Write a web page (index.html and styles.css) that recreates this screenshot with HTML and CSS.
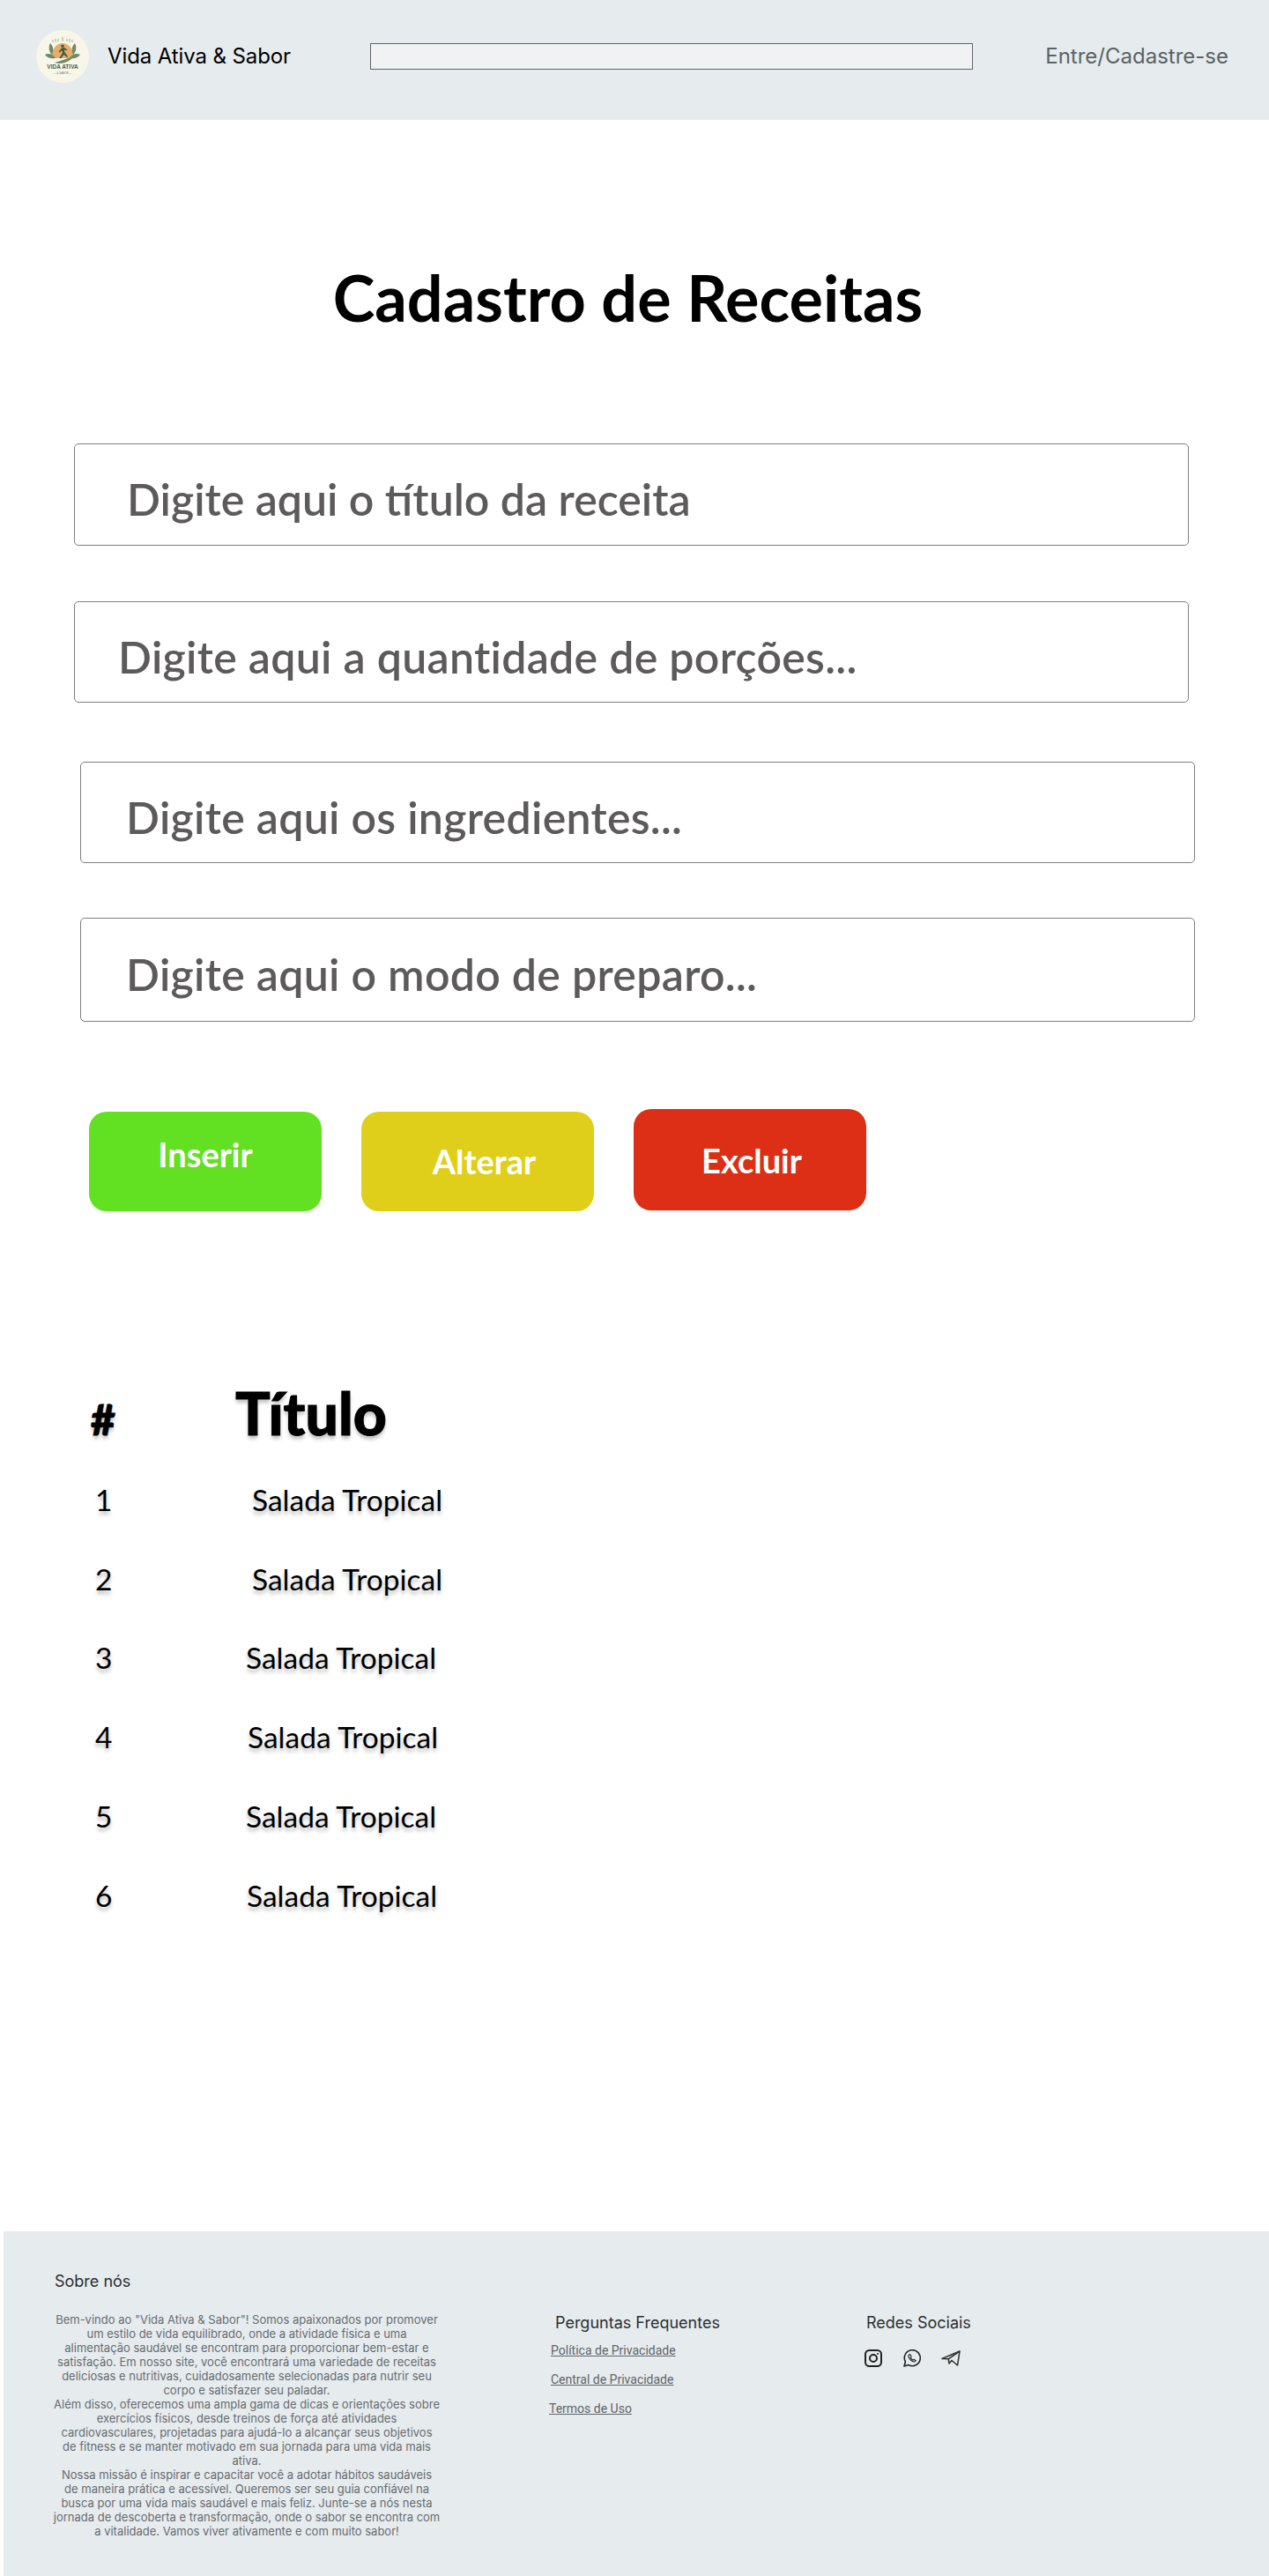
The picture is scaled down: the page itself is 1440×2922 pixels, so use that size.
FILE: index.html
```html
<!DOCTYPE html>
<html lang="pt-BR">
<head>
  <meta charset="UTF-8" />
  <meta name="viewport" content="width=device-width, initial-scale=1.0"/>
  <title>Cadastro de Receitas</title>
  <link rel="stylesheet" href="styles.css">
</head>
<body>
  <header class="top-bar">
    <div class="brand">
      <svg class="logo" viewBox="0 0 60 60" width="60" height="60" aria-hidden="true">
        <circle cx="30" cy="30" r="30" fill="#f8f6e9"/>
        <path d="M19 11v3M22 10v4M25 10v3M30 8v5M35 10v3M38 10v4M41 11v3" stroke="#a9ab94" stroke-width="1" fill="none"/>
        <path d="M17 32a13 17 0 0 1 26 0z" fill="#e8ad6a"/>
        <path d="M16 15c-2 4-2 9 2 13 2-4 2-9-2-13zM44 15c2 4 2 9-2 13-2-4-2-9 2-13zM10 28c4-2 9-1 12 4-5 1-9 0-12-4zM50 28c-4-2-9-1-12 4 5 1 9 0 12-4z" fill="#6f8a66"/>
        <path d="M30 16.500a1.800 1.800 0 1 1 0 3.600 1.800 1.800 0 0 1 0-3.600zM29 20.500l-3.500 4 1.500 1 2-2.500 1 3-3.500 5.500 1.500 1 3.500-4.500 3.500 3 1-1-3.500-4.500-1-3.500 2.500 1.500 1.500-1-3.500-2.500z" fill="#3f5a45"/>
        <path d="M21 37c6-2 14-4 22-8-3 6-13 11-22 8z" fill="#6f8a66"/>
        <text class="logo-name" x="30" y="44" text-anchor="middle">VIDA ATIVA</text>
        <text class="logo-sub" x="30" y="50" text-anchor="middle">— &amp; SABOR —</text>
      </svg>
      <span class="brand-name">Vida Ativa &amp; Sabor</span>
    </div>
    <input class="search" type="text" aria-label="Buscar">
    <a class="login" href="#">Entre/Cadastre-se</a>
  </header>

  <main>
    <h1 class="page-title">Cadastro de Receitas</h1>

    <form class="recipe-form">
      <div class="field field-title">Digite aqui o título da receita</div>
      <div class="field field-portions">Digite aqui a quantidade de porções...</div>
      <div class="field field-ingredients">Digite aqui os ingredientes...</div>
      <div class="field field-steps">Digite aqui o modo de preparo...</div>

      <div class="actions">
        <button class="btn btn-insert" type="button">Inserir</button>
        <button class="btn btn-edit" type="button">Alterar</button>
        <button class="btn btn-delete" type="button">Excluir</button>
      </div>
    </form>

    <section class="recipes">
      <div class="head-row"><span class="head-num">#</span><span class="head-title">Título</span></div>
      <div class="row"><span class="num">1</span><span class="name n1">Salada Tropical</span></div>
      <div class="row"><span class="num">2</span><span class="name n1">Salada Tropical</span></div>
      <div class="row"><span class="num">3</span><span class="name n3">Salada Tropical</span></div>
      <div class="row"><span class="num">4</span><span class="name n4">Salada Tropical</span></div>
      <div class="row"><span class="num">5</span><span class="name n3">Salada Tropical</span></div>
      <div class="row"><span class="num">6</span><span class="name n6">Salada Tropical</span></div>
    </section>
  </main>

  <footer class="footer">
    <div class="about">
      <h4 class="about-title">Sobre nós</h4>
      <p class="about-text">Bem-vindo ao "Vida Ativa &amp; Sabor"! Somos apaixonados por promover um estilo de vida equilibrado, onde a atividade física e uma alimentação saudável se encontram para proporcionar bem-estar e satisfação. Em nosso site, você encontrará uma variedade de receitas deliciosas e nutritivas, cuidadosamente selecionadas para nutrir seu corpo e satisfazer seu paladar.<br>Além disso, oferecemos uma ampla gama de dicas e orientações sobre exercícios físicos, desde treinos de força até atividades cardiovasculares, projetadas para ajudá-lo a alcançar seus objetivos de fitness e se manter motivado em sua jornada para uma vida mais ativa.<br>Nossa missão é inspirar e capacitar você a adotar hábitos saudáveis<br>de maneira prática e acessível. Queremos ser seu guia confiável na busca por uma vida mais saudável e mais feliz. Junte-se a nós nesta jornada de descoberta e transformação, onde o sabor se encontra com a vitalidade. Vamos viver ativamente e com muito sabor!</p>
    </div>
    <div class="faq">
      <h4 class="faq-title">Perguntas Frequentes</h4>
      <a class="faq-link" href="#">Política de Privacidade</a>
      <a class="faq-link" href="#">Central de Privacidade</a>
      <a class="faq-link terms" href="#">Termos de Uso</a>
    </div>
    <div class="social">
      <h4 class="social-title">Redes Sociais</h4>
      <div class="social-icons">
        <svg viewBox="0 0 20 20" width="20" height="20" fill="none" stroke="#222" stroke-width="2" aria-hidden="true">
          <rect x="1" y="1" width="18" height="18" rx="4.5"/>
          <circle cx="10" cy="10" r="4"/>
          <circle cx="15" cy="5" r="1" fill="#222" stroke="none"/>
        </svg>
        <svg viewBox="0 0 20 20" width="20" height="20" fill="none" stroke="#222" stroke-width="1.6" stroke-linejoin="round" stroke-linecap="round" aria-hidden="true">
          <path d="M1 19l1.4-5A9 9 0 1 1 6 17.6z"/>
          <path d="M7 5.800c-1 .6-1.300 2-.5 3.600 1 2 2.600 3.500 4.600 4.300 1.500.5 2.700.2 3.200-.9l-2.200-1.500-1 .9c-1.200-.5-2.300-1.600-2.900-2.900l.9-1-1.100-2.500z" stroke-width="1.100"/>
        </svg>
        <svg viewBox="0 0 22 20" width="22" height="20" fill="none" stroke="#333" stroke-width="1.600" stroke-linejoin="round" aria-hidden="true">
          <path d="M1 10.500L21 2l-2.500 16-6.500-5.500-3 3.500-.8-5.200z"/>
          <path d="M21 2L8.200 10.800"/>
        </svg>
      </div>
    </div>
  </footer>
</body>
</html>
```

FILE: styles.css
```css
* { box-sizing: border-box; }
body { margin: 0; background: #fff; color: #000; font-family: Inter, Arial, sans-serif; }

.top-bar { display: flex; align-items: center; height: 136px; padding: 0 46px 9px 41px; background-color: #e6ebee; }
.brand { display: flex; align-items: center; gap: 21px; width: 379px; }
.logo { display: block; flex: none; }
.logo-name { font-family: "Liberation Sans", Arial, sans-serif; font-size: 6.500px; font-weight: bold; fill: #4c5f50; }
.logo-sub { font-family: "Liberation Sans", Arial, sans-serif; font-size: 3px; fill: #6b7a6c; }
.brand-name { font-size: 24px; white-space: nowrap; letter-spacing: -0.1px; }
.search { width: 684px; height: 30px; padding: 0; border: 1px solid #5f6466; background-color: #f0f2f3; }
.login { margin-left: auto; font-size: 24px; color: #5b6265; text-decoration: none; white-space: nowrap; }

.page-title { margin: 156px 0 0; padding-right: 15px; text-align: center; font-family: Lato, Arial, sans-serif; font-size: 72px; line-height: 90px; font-weight: 700; }

.recipe-form { margin-top: 121px; }
.field { display: flex; align-items: center; width: 1265px; padding-top: 10px; border: 1px solid #7f7f7f; border-radius: 5px; font-family: Lato, Arial, sans-serif; font-size: 50px; font-weight: 600; color: #5c5a5a; white-space: nowrap; letter-spacing: 0.3px; }
.field-title { height: 116px; margin: 0 0 63px 84px; padding-left: 59px; letter-spacing: 0; }
.field-portions { height: 115px; margin: 0 0 67px 84px; padding-left: 49px; }
.field-ingredients { height: 115px; margin: 0 0 62px 91px; padding-left: 51px; }
.field-steps { height: 118px; margin: 0 0 0 91px; padding-left: 51px; }

.actions { display: flex; align-items: flex-start; gap: 45px; margin: 102px 0 0 101px; }
.btn { width: 264px; height: 113px; border: none; border-radius: 20px; color: #fff; font-family: Lato, Arial, sans-serif; font-size: 38px; font-weight: 700; }
.btn-insert { background-color: #62e022; padding: 0 0 17px; }
.btn-edit { background-color: #e0cf1a; padding: 0 0 2px 15px; }
.btn-delete { background-color: #dd2f16; height: 115px; margin-top: -3px; padding: 0 0 0 4px; }

.recipes { margin: 199px 0 0 103px; text-shadow: 0 4px 4px rgba(0, 0, 0, 0.25); }
.head-row { display: flex; align-items: baseline; height: 60px; font-family: Lato, Arial, sans-serif; font-weight: 900; -webkit-text-stroke: 1px #000; }
.head-num { width: 164px; font-size: 48px; line-height: 52px; }
.head-title { font-size: 66px; line-height: 60px; }
.row { display: flex; align-items: center; height: 89.8px; font-family: Lato, Arial, sans-serif; font-size: 33.5px; }
.head-row + .row { margin-top: 23px; }
.num { width: 176px; padding-left: 5px; }
.name { white-space: nowrap; }
.n1 { margin-left: 7px; }
.n3 { margin-left: 0; }
.n4 { margin-left: 2px; }
.n6 { margin-left: 1px; }

.footer { display: flex; align-items: flex-start; height: 391px; margin: 336px 0 0 4px; padding: 46px 0 0 56px; background-color: #e6ebee; }
.about { flex: none; width: 440px; }
.about-title { margin: 0 0 24px 2px; font-size: 18px; line-height: 22px; font-weight: 400; color: #2b2f31; }
.about-text { margin: 0; font-size: 13px; line-height: 16px; text-align: center; color: #666c70; }
.faq { display: flex; flex: none; flex-direction: column; align-items: flex-start; width: 360px; margin: 47px 0 0 123px; }
.faq-title { margin: 0 0 12px 7px; font-size: 18px; line-height: 22px; font-weight: 400; color: #2b2f31; }
.faq-link { margin: 0 0 16px 2px; font-family: Roboto, Arial, sans-serif; font-size: 14px; line-height: 17px; color: #5f6568; }
.terms { margin-left: 0; }
.social { margin: 47px 0 0 -2px; }
.social-title { margin: 0 0 19px 2px; font-size: 18px; line-height: 22px; font-weight: 400; color: #2b2f31; }
.social-icons { display: flex; align-items: center; gap: 23.5px; }
.social-icons svg { display: block; }
```
